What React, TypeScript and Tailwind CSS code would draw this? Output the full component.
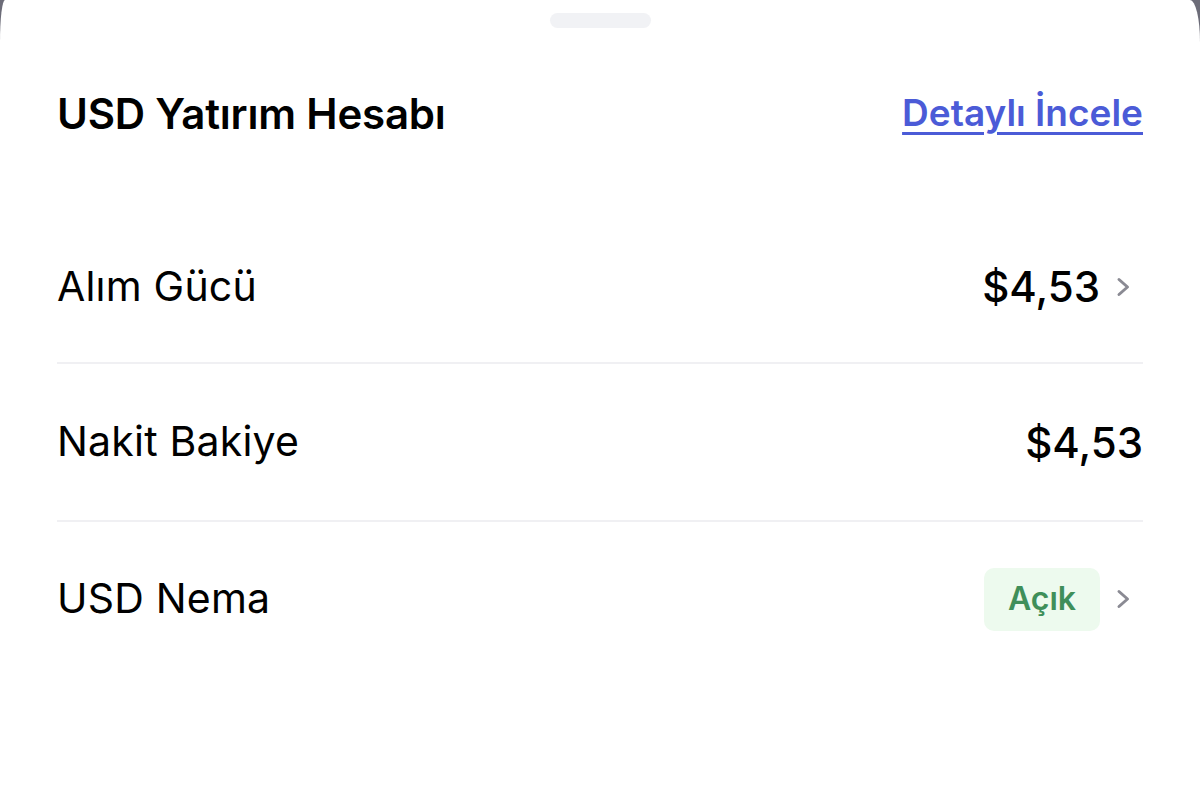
function Row({ label, h, children }: { label: string; h: string; children: React.ReactNode }) {
  return (
    <div className={`flex items-center justify-between ${h}`}>
      <span className="text-[41px] tracking-[0.2px] text-black">{label}</span>
      <div className="flex items-center">{children}</div>
    </div>
  );
}

function Chevron() {
  return (
    <svg width="15" height="20" viewBox="0 0 15 20" className="ml-[16px] mr-[12px]" fill="none">
      <path d="M3 2.5 L11.5 10 L3 17.5" stroke="#8a8a93" strokeWidth="3" strokeLinecap="round" strokeLinejoin="round" />
    </svg>
  );
}

export default function App() {
  return (
    <div className="h-[785px] w-full overflow-hidden bg-[#6c6c78]" style={{ fontFamily: 'Inter, "Noto Sans", sans-serif' }}>
      <div className="h-full w-full rounded-tl-[5px_42px] rounded-tr-[10px_42px] bg-white">
        <div className="pt-[13px]">
          <div className="mx-auto h-[15px] w-[101px] rounded-full bg-[#f1f2f5]" />
        </div>

        <div className="px-[57px]">
          <div className="mt-[55px] flex h-[60px] items-center justify-between">
            <h1 className="text-[42px] font-semibold tracking-[-0.2px] text-black">USD Yatırım Hesabı</h1>
            <a className="text-[37px] font-semibold text-[#4b5bd7] underline decoration-[3px] underline-offset-[6px]">
              Detaylı İncele
            </a>
          </div>

          <div className="mt-[68px]">
            <Row label="Alım Gücü" h="h-[151px]">
              <span className="text-[42px] font-medium text-black">$4,53</span>
              <Chevron />
            </Row>
            <div className="h-[2px] bg-[#f0f0f3]" />
            <Row label="Nakit Bakiye" h="h-[156px]">
              <span className="text-[42px] font-medium text-black">$4,53</span>
            </Row>
            <div className="h-[2px] bg-[#f0f0f3]" />
            <Row label="USD Nema" h="h-[154px]">
              <span className="flex h-[63px] w-[116px] items-center justify-center rounded-[10px] bg-[#edfaee] text-[32px] font-semibold text-[#3f8f5a]">
                Açık
              </span>
              <Chevron />
            </Row>
          </div>
        </div>
      </div>
    </div>
  );
}
